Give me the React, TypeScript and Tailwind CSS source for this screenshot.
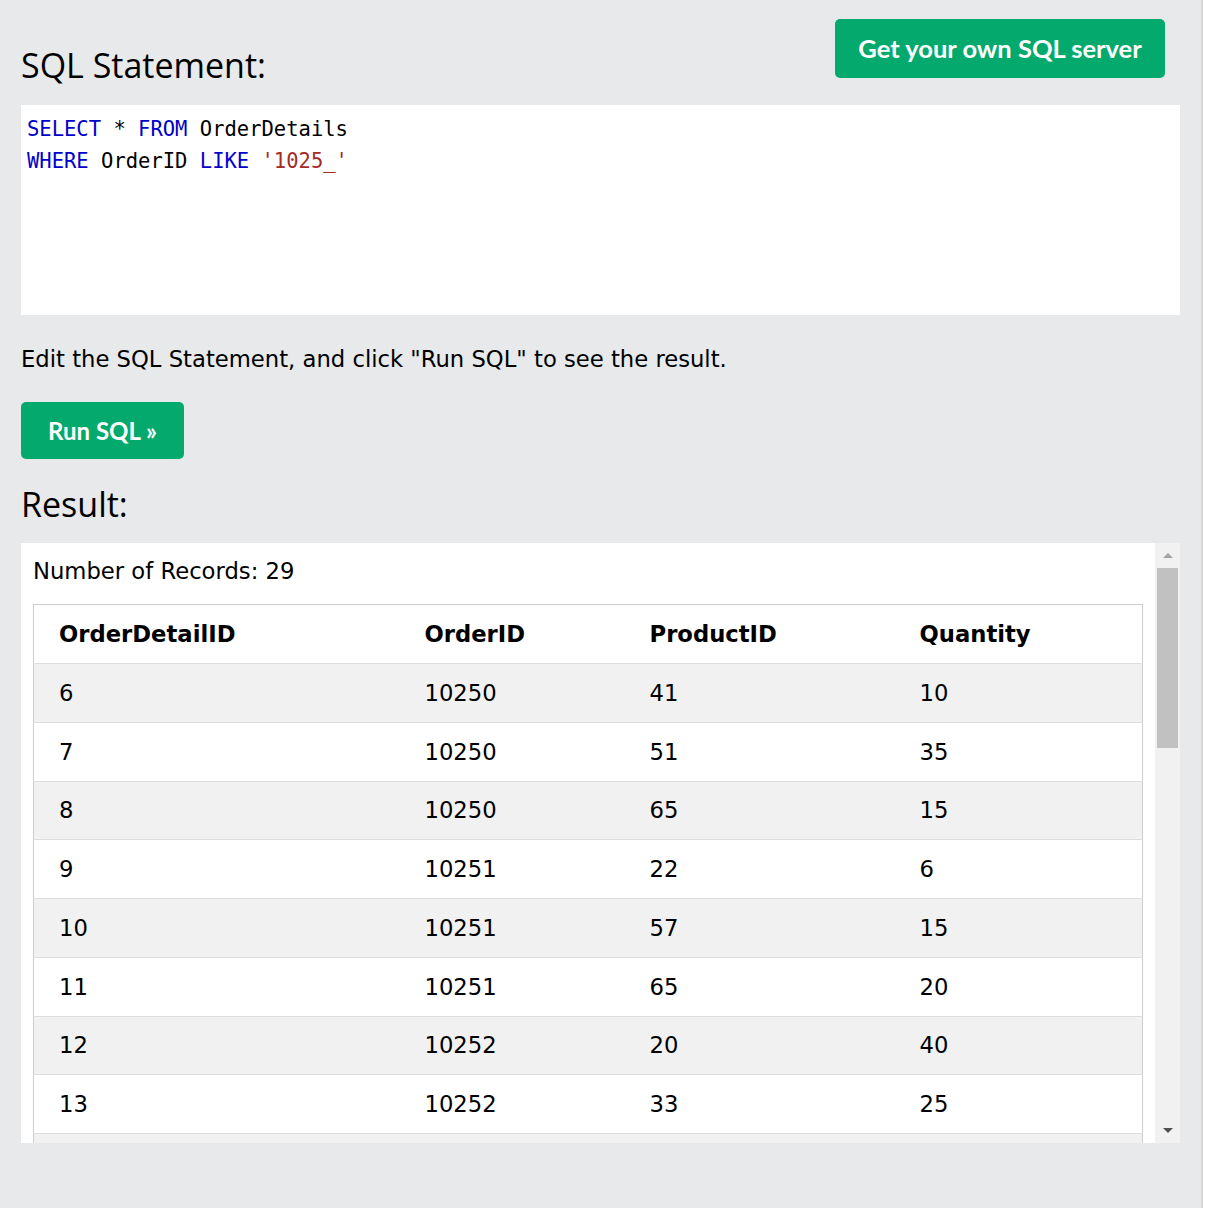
import React from 'react';

const rows: [number, number, number, number][] = [
    [6, 10250, 41, 10],
    [7, 10250, 51, 35],
    [8, 10250, 65, 15],
    [9, 10251, 22, 6],
    [10, 10251, 57, 15],
    [11, 10251, 65, 20],
    [12, 10252, 20, 40],
    [13, 10252, 33, 25],
    [14, 10252, 60, 40],
    [15, 10253, 31, 20],
];

const heading = { fontFamily: '"Open Sans", "Noto Sans", sans-serif' };
const verdana = { fontFamily: '"DejaVu Sans", Verdana, sans-serif' };
const btnFont = { fontFamily: 'Lato, "Noto Sans", sans-serif' };

export default function App() {
    return (
        <div className="min-h-[1208px] w-[1203px] bg-[#e7e9eb] border-r-2 border-[#d6d8da] text-black">
            <div className="pl-[21px] pr-[21px]">
                <div className="flex h-[105px] justify-between">
                    <h2 style={heading} className="mt-[41px] text-[34px] leading-[48px] font-normal">SQL Statement:</h2>
                    <button
                        style={btnFont}
                        className="mt-[19px] mr-[15px] h-[59px] w-[330px] rounded-[5px] bg-[#04aa6d] text-[25.5px] font-bold text-white"
                    >
                        Get your own SQL server
                    </button>
                </div>

                <div
                    className="h-[210px] bg-white px-[6px] pt-[8px] text-[20.5px] leading-[32px]"
                    style={{ fontFamily: '"DejaVu Sans Mono", Consolas, monospace' }}
                >
                    <div>
                        <span className="text-[#0000cd]">SELECT</span> * <span className="text-[#0000cd]">FROM</span> OrderDetails
                    </div>
                    <div>
                        <span className="text-[#0000cd]">WHERE</span> OrderID <span className="text-[#0000cd]">LIKE</span>{' '}
                        <span className="text-[#a52a2a]">'1025_'</span>
                    </div>
                </div>

                <p style={verdana} className="mt-[28px] text-[22.7px] leading-[32px]">
                    Edit the SQL Statement, and click "Run SQL" to see the result.
                </p>

                <button
                    style={btnFont}
                    className="mt-[27px] h-[57px] w-[163px] rounded-[5px] bg-[#04aa6d] text-[24px] font-bold text-white"
                >
                    Run SQL »
                </button>

                <h2 style={heading} className="mt-[21px] text-[34px] leading-[48px] font-normal">Result:</h2>

                <div className="mt-[15px] flex h-[600px] overflow-hidden bg-white">
                    <div className="flex-1 overflow-hidden pl-[12px] pr-[12px]" style={verdana}>
                        <div className="pt-[12px] text-[22.7px] leading-[32px]">Number of Records: 29</div>
                        <table className="mt-[17px] w-full border-collapse border border-[#cccccc] text-[22.7px]">
                            <thead>
                                <tr className="h-[59px] border-b border-[#dddddd] text-left">
                                    <th className="w-[366px] pl-[25px] font-bold">OrderDetailID</th>
                                    <th className="w-[225px] pl-[25px] font-bold">OrderID</th>
                                    <th className="w-[270px] pl-[25px] font-bold">ProductID</th>
                                    <th className="pl-[25px] font-bold">Quantity</th>
                                </tr>
                            </thead>
                            <tbody>
                                {rows.map((r, i) => (
                                    <tr
                                        key={r[0]}
                                        className={`h-[58.75px] border-b border-[#dddddd] ${i % 2 === 0 ? 'bg-[#f1f1f1]' : 'bg-white'}`}
                                    >
                                        {r.map((c, j) => (
                                            <td key={j} className="pl-[25px]">{c}</td>
                                        ))}
                                    </tr>
                                ))}
                            </tbody>
                        </table>
                    </div>
                    <div className="flex w-[25px] flex-col items-center bg-[#f1f1f1]">
                        <div className="flex h-[25px] w-full items-center justify-center">
                            <div className="h-0 w-0 border-x-[5px] border-b-[5px] border-x-transparent border-b-[#a3a3a3]" />
                        </div>
                        <div className="h-[180px] w-[21px] bg-[#c1c1c1]" />
                        <div className="flex-1" />
                        <div className="flex h-[25px] w-full items-center justify-center">
                            <div className="h-0 w-0 border-x-[5px] border-t-[5px] border-x-transparent border-t-[#505050]" />
                        </div>
                    </div>
                </div>
            </div>
        </div>
    );
}
